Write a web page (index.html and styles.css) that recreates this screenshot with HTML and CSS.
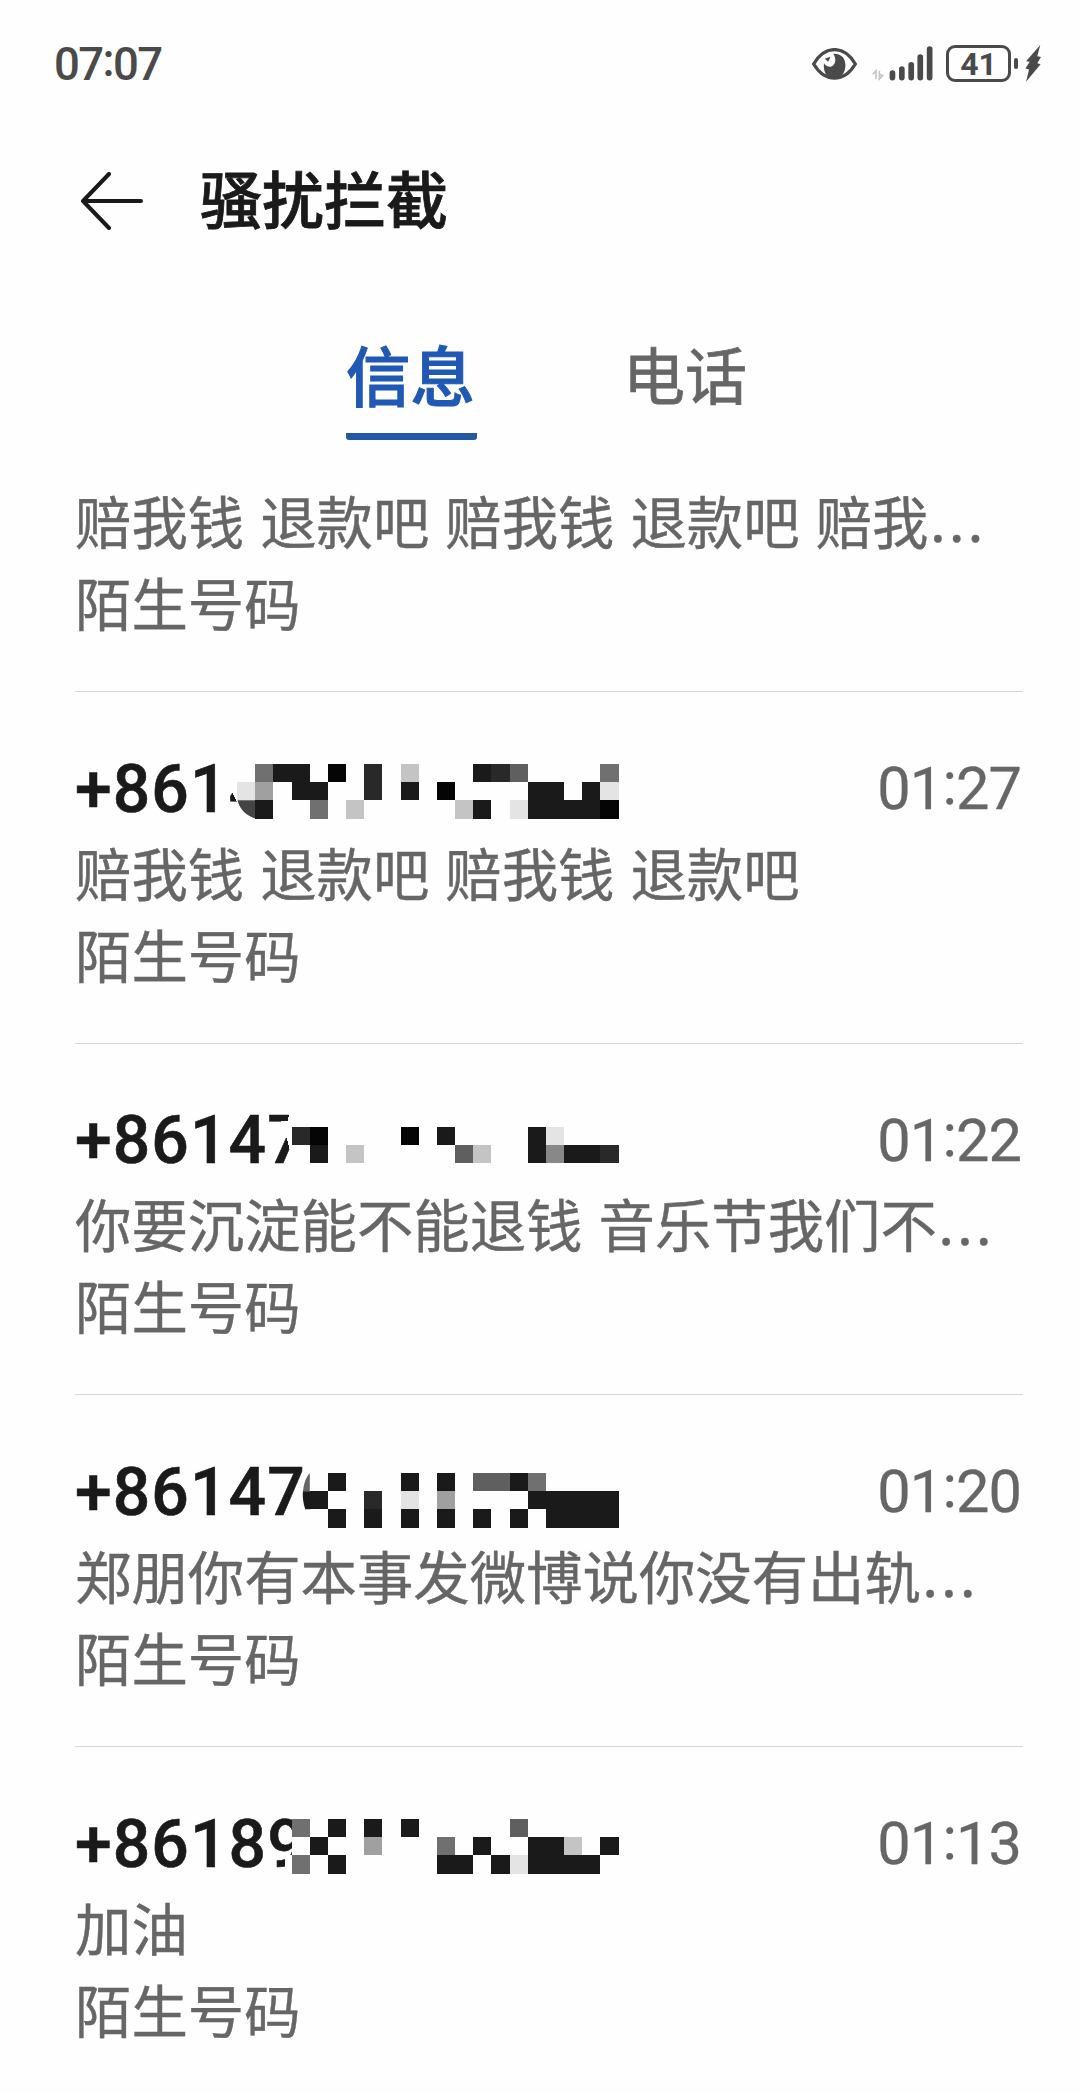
FILE: index.html
```html
<!doctype html>
<html lang="zh-CN">
 <head>
  <meta charset="utf-8">
  <title>骚扰拦截</title>
  <link rel="stylesheet" href="styles.css">
 </head>
 <body>
  <div class="status">
    <span class="clock">07<i class="colon">:</i>07</span>
    <div class="status-icons">
      <svg class="eye" viewBox="0 0 136 96">
        <path d="M5 48C39-10 97-10 131 48C97 105 39 105 5 48Z" fill="none" stroke="#4a4a4a" stroke-width="10"/>
        <path d="M64 17C92 16 101 34 101 52C101 79 85 91 67 91C47 91 33 76 36 45C43 58 58 60 65 51C73 42 72 28 64 17Z" fill="#4a4a4a"/>
        <path d="M39 32L56 26L49 41Z" fill="#4a4a4a"/>
      </svg>
      <svg class="signal" viewBox="0 0 182 104">
        <path d="M2 84L12 74V98M22 74V98L32 88L22 84" fill="none" stroke="#c4c4c4" stroke-width="5"/>
        <path d="M61 81V94M89 69V94M117 56V94M144 33V94M172 9V94" stroke="#4a4a4a" stroke-width="17" stroke-linecap="round"/>
      </svg>
      <div class="battery">41</div>
      <span class="nub"></span>
      <svg class="bolt" viewBox="0 0 48 112"><path d="M46 0L3 49L14 51L1 71L12 74L3 111L47 58L37 55L48 36L37 34Z" fill="#4a4a4a"/></svg>
    </div>
  </div>

  <div class="header">
    <svg class="back" viewBox="0 0 62 58"><path d="M28 2L2 29L28 56M2 29H60" fill="none" stroke="#1a1a1a" stroke-width="4" stroke-linecap="round" stroke-linejoin="round"/></svg>
    <h1 class="title">骚扰拦截</h1>
  </div>

  <div class="tabs">
    <div class="tab active">信息</div>
    <div class="tab">电话</div>
  </div>

  <!-- Blocked messages -->
  <div class="list">
    <div class="item first">
      <div class="msg">赔我钱 退款吧 赔我钱 退款吧 赔我<span class="more">…</span></div>
      <div class="label">陌生号码</div>
    </div>
    <div class="item">
      <div class="row">
        <span class="number">+8614<svg class="mosaic" viewBox="0 0 21 3" data-cells="-6bb-0-c-t---bc5----6|ya-bb--c-b-0----bb-by|-b--6-t-----tb-ybbbb0">
          <path class="cover" d="M-.5-.4L-.3 1.5L-.05 2Q.2 2.8 1 3.1H21V-.4Z"/>
          <path class="part" fill="#444" d="M.02 2H1V3Q.2 2.75 .02 2Z"/>
        </svg></span>
        <span class="time">01<i class="colon">:</i>27</span>
      </div>
      <div class="msg">赔我钱 退款吧 赔我钱 退款吧</div>
      <div class="label">陌生号码</div>
    </div>
    <div class="item">
      <div class="row">
        <span class="number">+86147<svg class="mosaic low" viewBox="0 0 21 3" data-cells="---c0----0-b----by---|----b-t-----5t--b8bbc">
          <path class="cover" d="M2.88-.9L2.8-.35H2.4L2.7 .54L2.9 1.25V2.3H21V-.9Z"/>
        </svg></span>
        <span class="time">01<i class="colon">:</i>22</span>
      </div>
      <div class="msg">你要沉淀能不能退钱 音乐节我们不<span class="more">…</span></div>
      <div class="label">陌生号码</div>
    </div>
    <div class="item">
      <div class="row">
        <span class="number">+86147<svg class="mosaic mid" viewBox="0 0 21 3" data-cells="-----b---b-b-55b6----|----b--c-y-a----bbbbb|-----b-b-b-b-b-b-bbbb">
          <path class="part" fill="#666" d="M4 0V1H3.62Q3.7 .3 4 0Z"/>
          <path class="part" fill="#1a1a1a" d="M3.62 1H4.05V2H3.75Q3.58 1.5 3.62 1Z"/>
        </svg></span>
        <span class="time">01<i class="colon">:</i>20</span>
      </div>
      <div class="msg">郑朋你有本事发微博说你没有出轨<span class="more">…</span></div>
      <div class="label">陌生号码</div>
    </div>
    <div class="item">
      <div class="row">
        <span class="number">+86189<svg class="mosaic" viewBox="0 0 21 3" data-cells="---6-b-b-b-----5-----|----b--a---6-b--bbt-b|---6-b-----bb-bybbbb-">
          <path class="cover" d="M3-.4V2H2.65V3.2H21V-.4Z"/>
        </svg></span>
        <span class="time">01<i class="colon">:</i>13</span>
      </div>
      <div class="msg">加油</div>
      <div class="label">陌生号码</div>
    </div>
  </div>

  <script>
    // one letter per mosaic block, "-" is an empty block
    const shades = { '0': '#050505', b: '#1a1a1a', c: '#292929', '5': '#5f5f5f', '6': '#707070', '8': '#888', a: '#a0a0a0', t: '#c4c4c4', y: '#e4e4e4' };

    document.querySelectorAll('.mosaic').forEach(function (svg) {
      svg.dataset.cells.split('|').forEach(function (line, y) {
        for (let x = 0; x < line.length; x++) {
          if (line[x] === '-') continue;
          const rect = document.createElementNS('http://www.w3.org/2000/svg', 'rect');
          rect.setAttribute('x', x);
          rect.setAttribute('y', y);
          rect.setAttribute('width', 1);
          rect.setAttribute('height', 1);
          rect.setAttribute('fill', shades[line[x]]);
          svg.appendChild(rect);
        }
      });
    });
  </script>
 </body>
</html>
```
FILE: styles.css
```css
* {
  box-sizing: border-box;
}
body {
  margin: 0;
  width: 1080px;
  height: 2093px;
  overflow: hidden;
  background-color: #fefefe;
  color: #666;
  font-family: Roboto, "Noto Sans CJK SC", sans-serif;
}
.colon {
  font-style: normal;
  vertical-align: 0.09em;
}

/* Status bar */
.status {
  display: flex;
  justify-content: space-between;
  align-items: center;
  height: 127px;
  padding: 0 39px 0 54px;
  color: #4a4a4a;
}
.clock {
  font-size: 45.5px;
  font-weight: 500;
  letter-spacing: -1.6px;
  line-height: 50px;
}
.status-icons {
  display: flex;
  align-items: center;
}
.eye {
  width: 45px;
  height: 32px;
}
.signal {
  width: 61px;
  height: 35px;
  margin-left: 15px;
}
.battery {
  width: 65px;
  height: 37px;
  margin-left: 13px;
  border: 3px solid #4a4a4a;
  border-radius: 9px;
  font-size: 32px;
  font-weight: 700;
  line-height: 33px;
  text-align: center;
}
.nub {
  width: 4px;
  height: 11px;
  margin-left: 3px;
  border-radius: 2px;
  background-color: #4a4a4a;
}
.bolt {
  width: 16px;
  height: 37px;
  margin-left: 7px;
}

/* Title bar */
.header {
  display: flex;
  align-items: center;
  height: 147px;
  padding-left: 81px;
}
.back {
  width: 62px;
  height: 58px;
}
.title {
  margin: 0 0 0 57px;
  padding-top: 5px;
  color: #1a1a1a;
  font-size: 62px;
  font-weight: 500;
  line-height: 90px;
  -webkit-text-stroke: 0.8px #1a1a1a;
}

/* Tabs */
.tabs {
  display: flex;
  height: 166px;
  padding: 58px 0 0 346px;
  gap: 146px;
}
.tab {
  height: 108px;
  padding-top: 2px;
  font-size: 62px;
  line-height: 90px;
  -webkit-text-stroke: 0.8px #666;
}
.tab.active {
  width: 131px;
  border-bottom: 7px solid #2559a5;
  border-radius: 3px;
  color: #2059b5;
  font-size: 64.5px;
  font-weight: 500;
  -webkit-text-stroke: 1px #2059b5;
}

/* List */
.list {
  padding: 0 57px 0 75px;
}
.item {
  height: 351.7px;
  padding-top: 51px;
  border-top: 1.5px solid #d6d6d6;
}
.item.first {
  height: 251px;
  padding-top: 43.5px;
  border-top: none;
}
.row {
  display: flex;
  justify-content: space-between;
  align-items: center;
  height: 92.5px;
  padding-right: 2px;
}
.number {
  position: relative;
  color: #1a1a1a;
  font-size: 66px;
  font-weight: 500;
  letter-spacing: 1.1px;
  line-height: 91px;
  -webkit-text-stroke: 0.6px #1a1a1a;
}
.mosaic {
  position: absolute;
  left: 161.5px;
  top: 20px;
  width: 381.8px;
  height: 54.5px;
  overflow: visible;
  shape-rendering: crispEdges;
  -webkit-text-stroke: 0;
}
.mosaic.low {
  top: 32px;
}
.mosaic.mid {
  top: 26px;
}
.cover {
  fill: #fefefe;
}
.part {
  shape-rendering: auto;
}
.time {
  padding-bottom: 5px;
  font-size: 59.5px;
  letter-spacing: -0.9px;
  line-height: 86px;
  -webkit-text-stroke: 0.3px #666;
}
.msg,
.label {
  height: 82px;
  font-size: 56.4px;
  line-height: 82px;
  white-space: nowrap;
  -webkit-text-stroke: 0.4px #666;
}
.msg {
  word-spacing: 2px;
}
.more {
  font-family: "Noto Sans CJK SC", sans-serif;
  line-height: 1;
  vertical-align: -0.28em;
}
```
